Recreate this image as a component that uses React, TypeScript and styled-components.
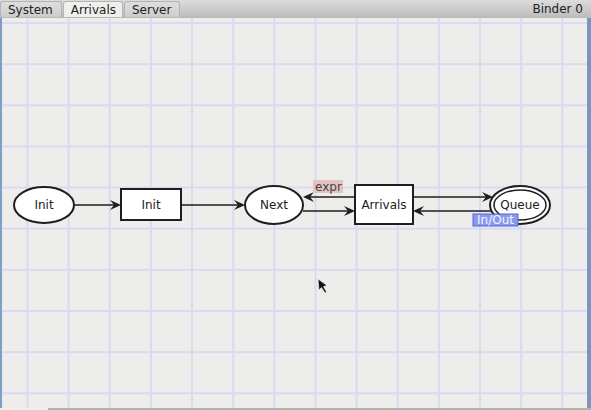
import styled, { createGlobalStyle } from 'styled-components';

const GlobalStyle = createGlobalStyle`
  html, body {
    margin: 0;
    padding: 0;
    background: #ededeb;
    font-family: "DejaVu Sans", Verdana, sans-serif;
  }
`;

const Window = styled.div`
  width: 591px;
  height: 410px;
  display: flex;
  flex-direction: column;
  overflow: hidden;
  background: #ededeb;
`;

const TabBar = styled.div`
  height: 18px;
  display: flex;
  align-items: flex-end;
  background: linear-gradient(#dcdcdc, #bdbdbd);
  border-bottom: 1px solid #b8b8b8;
  box-sizing: border-box;
`;

const Tab = styled.div<{ $active?: boolean }>`
  height: 16px;
  padding: 0 ${(p) => (p.$active ? '6px' : '8px')} 0 7px;
  margin-right: 1px;
  display: flex;
  align-items: center;
  font-size: 12px;
  color: #222;
  border-radius: 3px 3px 0 0;
  border: 1px solid #b4b4b4;
  border-bottom: none;
  box-sizing: border-box;
  background: ${(p) => (p.$active ? '#efefed' : 'linear-gradient(#dedede, #cdcdcd)')};
`;

const Spacer = styled.div`
  flex: 1;
`;

const BinderLabel = styled.div`
  font-size: 12px;
  color: #222;
  align-self: center;
  padding-right: 8px;
`;

const Canvas = styled.div`
  position: relative;
  flex: 1;
  border-left: 2px solid #7f9ec4;
  border-right: 4px solid #7896bf;
  background-color: #ededeb;
  background-image:
    linear-gradient(to right, #dbd9f1 1.5px, transparent 1.5px),
    linear-gradient(to bottom, #dbd9f1 1.5px, transparent 1.5px);
  background-size: 41.15px 41.15px;
  background-position: 24.5px 4px;
`;

const ScrollEdge = styled.div`
  height: 2px;
  margin-left: 48px;
  background: #b0b0b0;
`;

const Diagram = styled.svg`
  position: absolute;
  left: 0;
  top: 0;
  width: 100%;
  height: 100%;
  font-family: "DejaVu Sans", Verdana, sans-serif;
  font-size: 12px;
`;

const STROKE = '#1e1e1e';

// barbed arrowhead, tip at (x, y), pointing left (dir -1) or right (dir 1)
function Head({ x, y, dir }: { x: number; y: number; dir: 1 | -1 }) {
  const b = x - dir * 11;
  const n = x - dir * 7;
  return <polygon points={`${x},${y} ${b},${y - 5} ${n},${y} ${b},${y + 5}`} fill={STROKE} />;
}

function Arc({ x1, x2, y }: { x1: number; x2: number; y: number }) {
  const dir = x2 > x1 ? 1 : -1;
  return (
    <g>
      <line x1={x1} y1={y} x2={x2 - dir * 7} y2={y} stroke={STROKE} strokeWidth={1.5} />
      <Head x={x2} y={y} dir={dir} />
    </g>
  );
}

function App() {
  return (
    <>
      <GlobalStyle />
      <Window>
        <TabBar>
          <Tab>System</Tab>
          <Tab $active>Arrivals</Tab>
          <Tab>Server</Tab>
          <Spacer />
          <BinderLabel>Binder 0</BinderLabel>
        </TabBar>
        <Canvas>
          <Diagram>
            <g transform="translate(-2,-18)">
              {/* places */}
              <ellipse cx={44} cy={205} rx={30} ry={18} fill="#fff" stroke={STROKE} strokeWidth={2} />
              <text x={44} y={209} textAnchor="middle" fill="#222">Init</text>

              <ellipse cx={274} cy={205} rx={29} ry={19} fill="#fff" stroke={STROKE} strokeWidth={2} />
              <text x={274} y={209} textAnchor="middle" fill="#222">Next</text>

              <ellipse cx={520} cy={205} rx={30} ry={19} fill="#fff" stroke={STROKE} strokeWidth={2} />
              <ellipse cx={520} cy={205} rx={26} ry={15} fill="none" stroke={STROKE} strokeWidth={1.5} />
              <text x={520} y={209} textAnchor="middle" fill="#222">Queue</text>

              {/* transitions */}
              <rect x={121} y={189} width={60} height={31} fill="#fff" stroke={STROKE} strokeWidth={2} />
              <text x={151} y={209} textAnchor="middle" fill="#222">Init</text>

              <rect x={355} y={185} width={58} height={39} fill="#fff" stroke={STROKE} strokeWidth={2} />
              <text x={384} y={209} textAnchor="middle" fill="#222">Arrivals</text>

              {/* arcs */}
              <Arc x1={74} x2={121} y={205} />
              <Arc x1={181} x2={245} y={205} />
              <Arc x1={355} x2={303} y={197} />
              <Arc x1={303} x2={355} y={211} />
              <Arc x1={413} x2={493} y={197} />
              <Arc x1={492} x2={413} y={211} />

              {/* inscriptions */}
              <rect x={313} y={180} width={30} height={13} fill="#e6c3bf" />
              <text x={315} y={191} fill="#444">expr</text>

              <rect x={473} y={214} width={45} height={12} fill="#8a99ee" stroke="#5566d8" strokeWidth={1} />
              <text x={477} y={224} fill="#f4f4ff">In/Out</text>

              {/* mouse pointer */}
              <path
                d="M318 279 L319 290 L321.5 287.5 L325 293 L326.5 292 L323.5 286.5 L327 285.5 Z"
                fill="#111"
                stroke="#eee"
                strokeWidth={0.6}
              />
            </g>
          </Diagram>
        </Canvas>
        <ScrollEdge />
      </Window>
    </>
  );
}

export default App;
